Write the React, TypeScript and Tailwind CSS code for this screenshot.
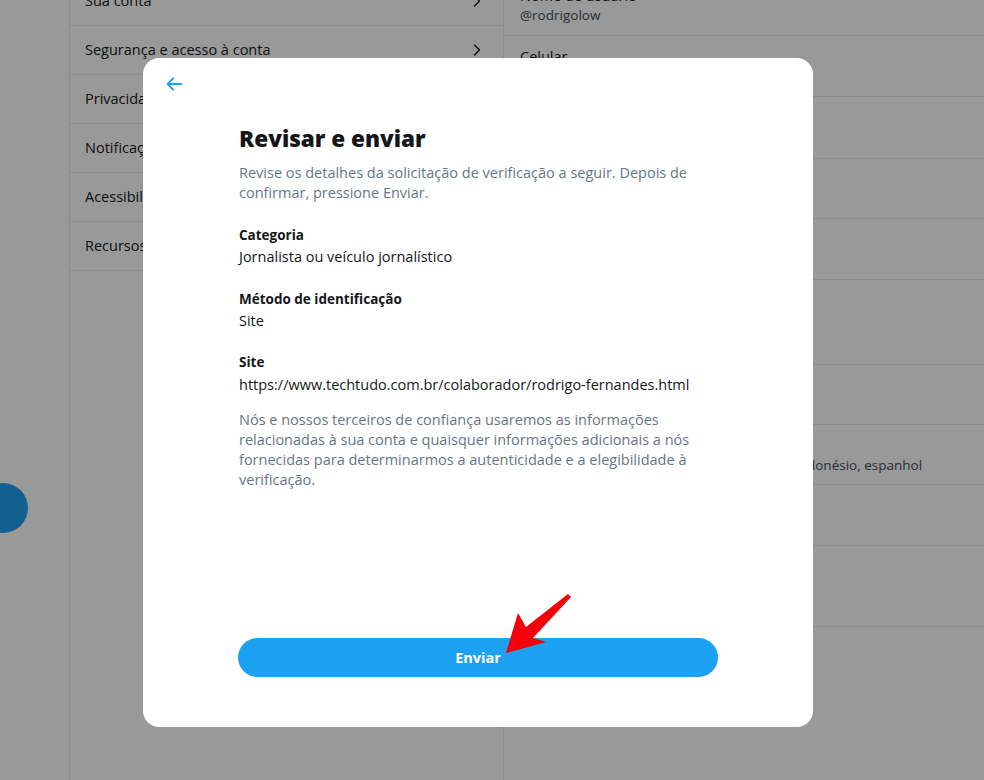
import { ChevronRight } from "lucide-react";

const menuItems = [
  "Sua conta",
  "Segurança e acesso à conta",
  "Privacidade e segurança",
  "Notificações",
  "Acessibilidade, exibição e idiomas",
  "Recursos adicionais",
];

// right column rows of the settings page (mostly hidden behind the dialog)
const accountRows = [
  { label: "Nome de usuário", value: "@rodrigolow", h: "h-[61px]" },
  { label: "Celular", value: "+55 21 99999-0000", h: "h-[61px]" },
  { label: "E-mail", value: "rodrigo@email.com", h: "h-[62px]" },
  { label: "Tweets protegidos", value: "Não", h: "h-[60px]" },
  { label: "Criação da conta", value: "12 de jan de 2010", h: "h-[61px]" },
  { label: "País", value: "Brasil", h: "h-[85px]" },
  { label: "Sexo", value: "Masculino", h: "h-[60px]" },
  { label: "Idiomas", value: "Português, inglês, francês, alemão, italiano, indonésio, espanhol", h: "h-[60px]" },
  { label: "Idade", value: "25-34", h: "h-[61px]" },
  { label: "Dados do Twitter", value: "Veja e baixe seus dados", h: "h-[81px]" },
];

function BackArrow() {
  return (
    <svg viewBox="0 0 24 24" className="h-[22px] w-[22px] fill-[#1da1f2]">
      <path d="M20 11H7.414l4.293-4.293c.39-.39.39-1.023 0-1.414s-1.023-.39-1.414 0l-6 6c-.39.39-.39 1.023 0 1.414l6 6c.195.195.45.293.707.293s.512-.098.707-.293c.39-.39.39-1.023 0-1.414L7.414 13H20c.553 0 1-.447 1-1s-.447-1-1-1z" />
    </svg>
  );
}

function Field({ label, value, gap }: { label: string; value: string; gap: string }) {
  return (
    <div>
      <div className="text-[13.5px] font-bold leading-5 text-[#14171a]">{label}</div>
      <div className={`${gap} text-[14.5px] leading-5 text-[#14171a]`}>{value}</div>
    </div>
  );
}

export default function App() {
  return (
    <div className="relative h-[780px] w-[984px] overflow-hidden bg-white font-['Open_Sans',sans-serif]">
      {/* settings page underneath */}
      <div className="flex h-full">
        <div className="w-[69px] shrink-0 pt-[483px]">
          <div className="-ml-[22px] h-[50px] w-[50px] rounded-full bg-[#1da1f2]" />
        </div>
        <div className="w-[435px] shrink-0 border-x border-[#e6ecf0]">
          <div className="-mt-[23px]">
            {menuItems.map((item) => (
              <div key={item} className="flex h-[49px] items-center justify-between border-b border-[#e6ecf0] pl-[15px] pr-[16px]">
                <span className="text-[14.5px] text-[#14171a]">{item}</span>
                <ChevronRight size={20} strokeWidth={1.5} className="text-[#14171a]" />
              </div>
            ))}
          </div>
        </div>
        <div className="flex-1">
          <div className="-mt-[25px]">
            {accountRows.map((row) => (
              <div key={row.label} className={`${row.h} border-b border-[#e6ecf0] px-4 pt-[11px]`}>
                <div className="text-[14.5px] leading-5 text-[#14171a]">{row.label}</div>
                <div className="whitespace-nowrap text-[13.5px] leading-[18px] text-[#44505a]">{row.value}</div>
              </div>
            ))}
          </div>
        </div>
      </div>

      {/* overlay + dialog */}
      <div className="absolute inset-0 bg-black/40 pl-[143px] pt-[58px]">
        <div className="flex h-[669px] w-[670px] flex-col rounded-2xl bg-white">
          <div className="flex h-[52px] shrink-0 items-center pl-5">
            <BackArrow />
          </div>
          <div className="mx-auto flex w-[480px] flex-1 flex-col pl-px">
            <h1 className="mt-[15px] text-[22.5px] font-extrabold leading-7 text-[#14171a]">Revisar e enviar</h1>
            <p className="mt-[10px] text-[14.5px] leading-5 text-[#657786]">
              Revise os detalhes da solicitação de verificação a seguir. Depois de confirmar, pressione Enviar.
            </p>
            <div className="mt-[22px]">
              <Field label="Categoria" value="Jornalista ou veículo jornalístico" gap="mt-[2px]" />
            </div>
            <div className="mt-[22px]">
              <Field label="Método de identificação" value="Site" gap="mt-[2px]" />
            </div>
            <div className="mt-[21px]">
              <Field
                label="Site"
                value="https://www.techtudo.com.br/colaborador/rodrigo-fernandes.html"
                gap="mt-[3px]"
              />
            </div>
            <p className="mt-[15px] pr-4 text-[14.5px] leading-5 text-[#657786]">
              Nós e nossos terceiros de confiança usaremos as informações relacionadas à sua conta e quaisquer
              informações adicionais a nós fornecidas para determinarmos a autenticidade e a elegibilidade à
              verificação.
            </p>
            <button className="-ml-px mb-[50px] mt-auto flex h-[39px] w-[480px] items-center justify-center rounded-full bg-[#1da1f2] text-[14.5px] font-bold text-white">
              Enviar
            </button>
          </div>
        </div>
      </div>

      {/* red annotation arrow */}
      <svg className="absolute left-[500px] top-[590px]" width="80" height="70" viewBox="0 0 80 70">
        <polygon points="6,63 18,23 26,37 68,4 71,7 33,48 46,52" fill="#f5000a" />
      </svg>
    </div>
  );
}
